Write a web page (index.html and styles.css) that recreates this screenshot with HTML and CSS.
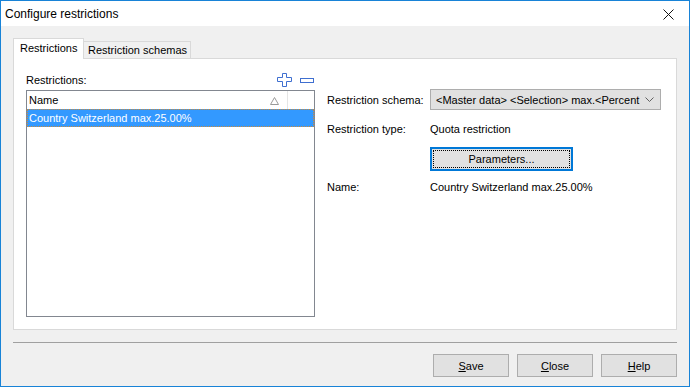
FILE: index.html
```html
<!DOCTYPE html>
<html>
<head>
  <meta charset="UTF-8">
  <title>Configure restrictions</title>
  <link rel="stylesheet" href="styles.css">
</head>
<body>
  <div class="window">
    <div class="titlebar">
      <span class="title">Configure restrictions</span>
      <svg class="close-x" width="11" height="11" viewBox="0 0 11 11">
        <path d="M0.5 0.5 L10.5 10.5 M10.5 0.5 L0.5 10.5" stroke="#111" stroke-width="1" fill="none"/>
      </svg>
    </div>

    <div class="content">
      <div class="tabs">
        <div class="tab active">Restrictions</div>
        <div class="tab">Restriction schemas</div>
      </div>
      <div class="tab-panel">
        <div class="left-col">
          <div class="list-head">
            <span>Restrictions:</span>
            <div class="icons">
              <svg width="15" height="14" viewBox="0 0 15 14">
                <path d="M5.5 0.5 H9.5 V4.5 H14.5 V8.5 H9.5 V13.5 H5.5 V8.5 H0.5 V4.5 H5.5 Z" fill="#fff" stroke="#3f6fd0" stroke-width="1"/>
              </svg>
              <svg width="14" height="5" viewBox="0 0 14 5">
                <rect x="0.5" y="0.5" width="13" height="4" fill="#fff" stroke="#3f6fd0" stroke-width="1"/>
              </svg>
            </div>
          </div>
          <div class="listbox">
            <div class="list-header">
              <div class="col-name">
                <span>Name</span>
                <svg class="sort" width="9" height="8" viewBox="0 0 9 8">
                  <path d="M4.5 0.5 L8.5 7.5 H0.5 Z" fill="none" stroke="#9a9a9a" stroke-width="1"/>
                </svg>
              </div>
              <div class="col-rest"></div>
            </div>
            <div class="list-row selected">Country Switzerland max.25.00%</div>
          </div>
        </div>

        <div class="right-col">
          <div class="field-row">
            <span class="field-label">Restriction schema:</span>
            <div class="combo">
              <span class="combo-text">&lt;Master data&gt; &lt;Selection&gt; max.&lt;Percent</span>
              <svg class="chevron" width="9" height="5" viewBox="0 0 9 5">
                <path d="M0.5 0.5 L4.5 4.5 L8.5 0.5" fill="none" stroke="#606060" stroke-width="1"/>
              </svg>
            </div>
          </div>
          <div class="field-row type-row">
            <span class="field-label">Restriction type:</span>
            <span>Quota restriction</span>
          </div>
          <div class="field-row param-row">
            <span class="field-label"></span>
            <button class="btn focused"><span class="focus-rect">Parameters...</span></button>
          </div>
          <div class="field-row name-row">
            <span class="field-label">Name:</span>
            <span>Country Switzerland max.25.00%</span>
          </div>
        </div>
      </div>

      <div class="separator"></div>

      <div class="button-bar">
        <button class="btn dlg-btn"><u>S</u>ave</button>
        <button class="btn dlg-btn"><u>C</u>lose</button>
        <button class="btn dlg-btn"><u>H</u>elp</button>
      </div>
    </div>
  </div>
</body>
</html>
```

FILE: styles.css
```css
html, body {
  margin: 0;
  padding: 0;
  overflow: hidden;
}
body {
  font-family: 'Liberation Sans', Arial, sans-serif;
  font-size: 11px;
  color: #000;
}
.window {
  width: 690px;
  height: 387px;
  box-sizing: border-box;
  border: 1px solid #1883d7;
  background: #f0f0f0;
  display: flex;
  flex-direction: column;
}
.titlebar {
  height: 25px;
  flex: 0 0 25px;
  background: #fff;
  display: flex;
  align-items: center;
  justify-content: space-between;
  padding: 0 15px 0 4px;
}
.title {
  font-size: 12px;
}
.close-x {
  margin-top: 1px;
}
.content {
  padding: 12px 12px 0 12px;
}
.tabs {
  display: flex;
  align-items: flex-end;
  height: 20px;
}
.tab {
  box-sizing: border-box;
  height: 17px;
  border: 1px solid #d9d9d9;
  border-bottom: none;
  background: #f0f0f0;
  padding: 0 4px;
  line-height: 17px;
  white-space: nowrap;
}
.tab.active {
  height: 21px;
  margin-bottom: -1px;
  background: #fff;
  width: 71px;
  padding: 0 6px;
  line-height: 18px;
  position: relative;
  z-index: 1;
}
.tab + .tab {
  border-left: none;
  padding: 0 3px 0 4px;
}
.tab-panel {
  box-sizing: border-box;
  height: 272px;
  border: 1px solid #d9d9d9;
  background: #fff;
  display: flex;
  padding: 14px 0 0 12px;
  gap: 12px;
}
.left-col {
  width: 289px;
  display: flex;
  flex-direction: column;
}
.list-head {
  display: flex;
  justify-content: space-between;
  align-items: flex-end;
  height: 14px;
  margin-bottom: 3px;
}
.list-head span {
  line-height: 13px;
}
.icons {
  display: flex;
  align-items: center;
  gap: 8px;
  padding-right: 1px;
}
.listbox {
  box-sizing: border-box;
  height: 227px;
  border: 1px solid #828790;
  background: #fff;
}
.list-header {
  display: flex;
  height: 18px;
}
.col-name {
  box-sizing: border-box;
  width: 261px;
  border-right: 1px solid #e5e5e5;
  display: flex;
  align-items: center;
  justify-content: space-between;
  padding: 0 8px 0 2px;
}
.sort {
  margin-top: 1px;
}
.list-row {
  box-sizing: border-box;
  height: 18px;
  line-height: 16px;
  padding-left: 1px;
}
.list-row.selected {
  background: #3399ff;
  color: #fff;
  border: 1px dotted #c98a3c;
}
.right-col {
  flex: 1;
  padding-top: 16px;
  display: flex;
  flex-direction: column;
}
.field-row {
  display: flex;
  align-items: center;
}
.field-label {
  width: 103px;
  flex: 0 0 103px;
}
.type-row {
  height: 18px;
  margin-top: 10px;
}
.param-row {
  margin-top: 9px;
}
.name-row {
  height: 18px;
  margin-top: 7px;
}
.combo {
  box-sizing: border-box;
  width: 231px;
  height: 21px;
  border: 1px solid #adadad;
  background: #e1e1e1;
  display: flex;
  align-items: center;
  padding: 0 6px 0 5px;
  gap: 6px;
}
.combo-text {
  flex: 1;
  white-space: nowrap;
}
.chevron {
  flex: 0 0 9px;
}
.btn {
  box-sizing: border-box;
  font-family: inherit;
  font-size: 11px;
  color: #000;
  background: #e1e1e1;
  border: 1px solid #adadad;
  margin: 0;
  padding: 0;
}
.btn.focused {
  width: 143px;
  height: 24px;
  border: 2px solid #0078d7;
  padding: 1px;
}
.focus-rect {
  display: block;
  box-sizing: border-box;
  height: 100%;
  border: 1px dotted #000;
  line-height: 16px;
}
.separator {
  height: 1px;
  background: #a0a0a0;
  margin-top: 12px;
}
.button-bar {
  display: flex;
  justify-content: flex-end;
  gap: 8px;
  margin-top: 11px;
}
.dlg-btn {
  width: 76px;
  height: 23px;
}
```
